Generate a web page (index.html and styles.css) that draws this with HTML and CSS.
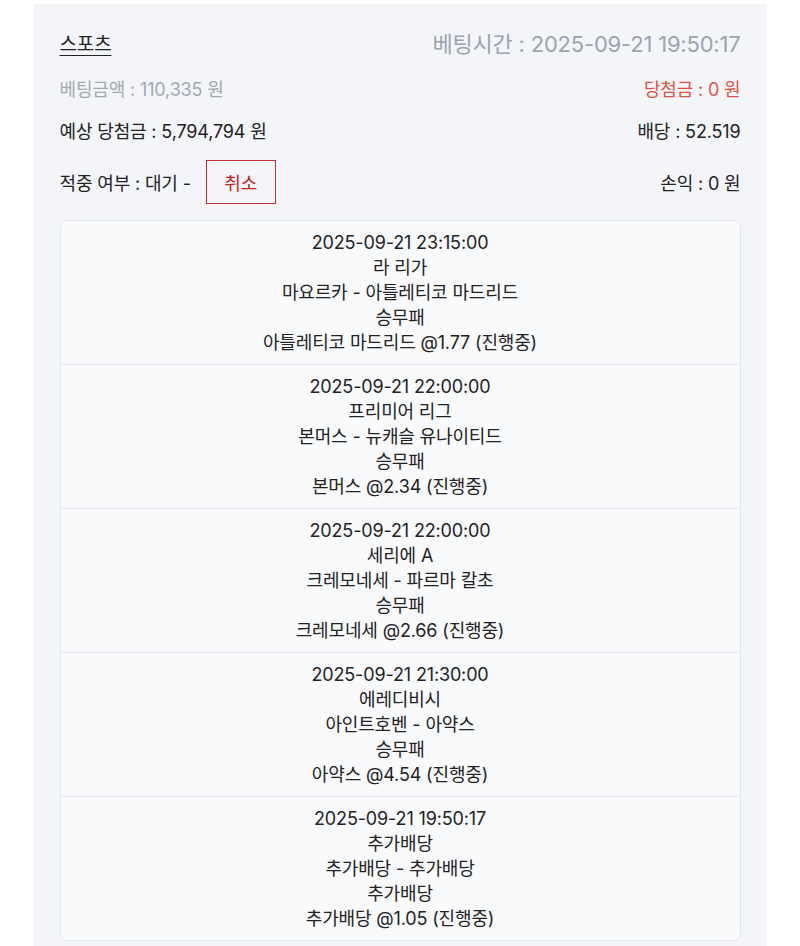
FILE: index.html
```html
<!DOCTYPE html>
<html lang="ko">
<head>
<meta charset="utf-8">
<link rel="stylesheet" href="styles.css">
</head>
<body>
<div class="panel">
  <div class="row head">
    <span class="title">스포츠</span>
    <span class="time">베팅시간 : 2025-09-21 19:50:17</span>
  </div>
  <div class="row r2">
    <span class="gray">베팅금액 : 110,335 원</span>
    <span class="red">당첨금 : 0 원</span>
  </div>
  <div class="row r3">
    <span>예상 당첨금 : 5,794,794 원</span>
    <span>배당 : 52.519</span>
  </div>
  <div class="row r4">
    <span class="status">적중 여부 : 대기 - <button class="cancel">취소</button></span>
    <span>손익 : 0 원</span>
  </div>
  <div class="card">
    <div class="item">
      <div>2025-09-21 23:15:00</div>
      <div>라 리가</div>
      <div>마요르카 - 아틀레티코 마드리드</div>
      <div>승무패</div>
      <div>아틀레티코 마드리드 @1.77 (진행중)</div>
    </div>
    <div class="item">
      <div>2025-09-21 22:00:00</div>
      <div>프리미어 리그</div>
      <div>본머스 - 뉴캐슬 유나이티드</div>
      <div>승무패</div>
      <div>본머스 @2.34 (진행중)</div>
    </div>
    <div class="item">
      <div>2025-09-21 22:00:00</div>
      <div>세리에 A</div>
      <div>크레모네세 - 파르마 칼초</div>
      <div>승무패</div>
      <div>크레모네세 @2.66 (진행중)</div>
    </div>
    <div class="item">
      <div>2025-09-21 21:30:00</div>
      <div>에레디비시</div>
      <div>아인트호벤 - 아약스</div>
      <div>승무패</div>
      <div>아약스 @4.54 (진행중)</div>
    </div>
    <div class="item">
      <div>2025-09-21 19:50:17</div>
      <div>추가배당</div>
      <div>추가배당 - 추가배당</div>
      <div>추가배당</div>
      <div>추가배당 @1.05 (진행중)</div>
    </div>
  </div>
</div>
</body>
</html>
```
FILE: styles.css
```css
html, body {
  margin: 0;
  padding: 0;
  background: #ffffff;
}
body {
  font-family: Inter, "Noto Sans CJK KR", sans-serif;
  color: #222222;
  font-size: 18px;
  letter-spacing: -0.15px;
}
.panel {
  width: 733px;
  margin: 4px auto 0;
  background: #f3f5f9;
  padding: 20px 26px 4px;
  box-sizing: border-box;
  min-height: 942px;
}
.row {
  display: flex;
  justify-content: space-between;
  align-items: center;
}
.head {
  height: 36px;
}
.title {
  font-size: 19px;
  text-decoration: underline;
  text-underline-offset: 4px;
  text-decoration-thickness: 1px;
}
.time {
  font-size: 22px;
  color: #9ca3af;
  letter-spacing: -0.2px;
}
.r2 {
  margin-top: 14px;
  height: 28px;
}
.r3 {
  margin-top: 14px;
  height: 28px;
}
.r4 {
  margin-top: 16px;
  height: 44px;
}
.gray {
  color: #a3a8b0;
}
.red {
  color: #e2543f;
}
.status {
  display: flex;
  align-items: center;
}
.cancel {
  margin-left: 15px;
  width: 70px;
  height: 44px;
  border: 1.5px solid #c62d2d;
  background: transparent;
  color: #c81e1e;
  font-family: inherit;
  font-size: 18px;
  letter-spacing: -0.15px;
  padding: 0;
  border-radius: 0;
}
.card {
  margin-top: 16px;
  background: #f9fafc;
  border: 1px solid #e3e6eb;
  border-radius: 8px;
}
.item {
  text-align: center;
  line-height: 25px;
  padding: 9px 0;
  border-top: 1px solid #e6e8ec;
}
.item:first-child {
  border-top: none;
}
```
